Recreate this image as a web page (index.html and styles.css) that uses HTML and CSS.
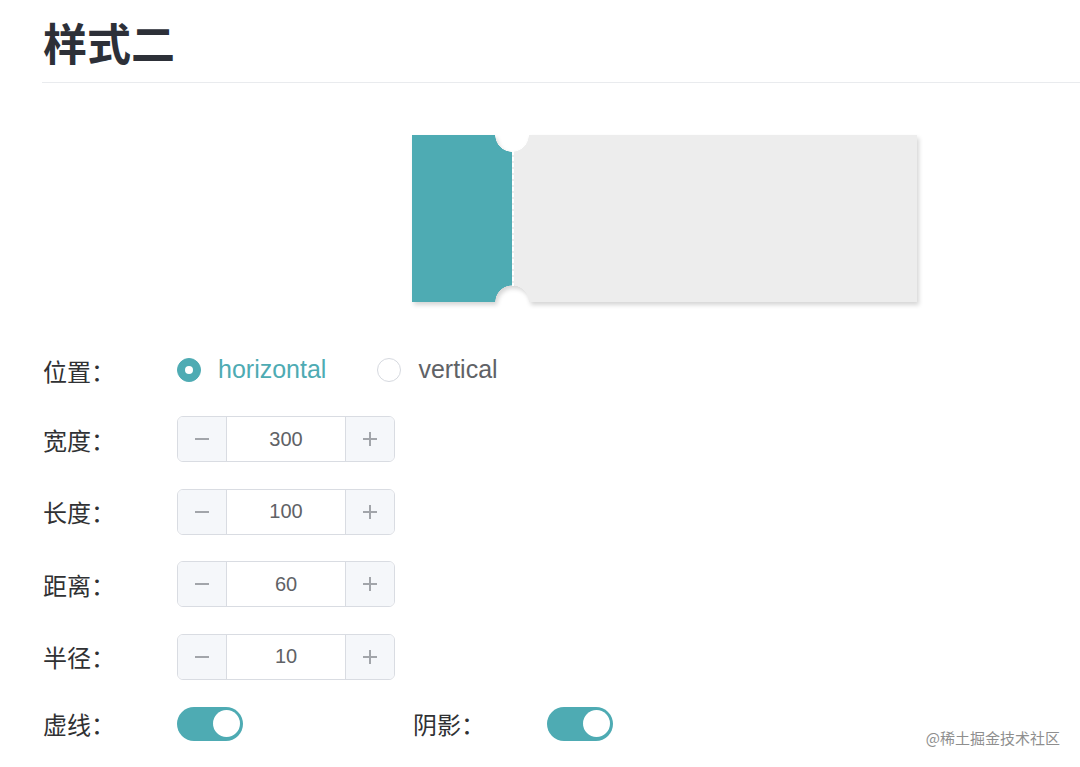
FILE: index.html
```html
<!DOCTYPE html>
<html lang="zh-CN">
<head>
<meta charset="utf-8">
<title>样式二</title>
<link rel="stylesheet" href="styles.css">
</head>
<body>
<div class="page">
  <h2 class="title">样式二</h2>

  <div class="preview">
    <div class="ticket">
      <div class="stub"></div>
      <div class="body"></div>
    </div>
  </div>

  <div class="form">
    <div class="row row-first">
      <span class="label">位置：</span>
      <div class="radios">
        <label class="radio checked"><span class="dot"></span><span class="rtext">horizontal</span></label>
        <label class="radio"><span class="dot"></span><span class="rtext">vertical</span></label>
      </div>
    </div>
    <div class="row row-second">
      <span class="label">宽度：</span>
      <div class="num"><span class="btn minus"><i class="h"></i></span><span class="val">300</span><span class="btn plus"><i class="h"></i><i class="v"></i></span></div>
    </div>
    <div class="row">
      <span class="label">长度：</span>
      <div class="num"><span class="btn minus"><i class="h"></i></span><span class="val">100</span><span class="btn plus"><i class="h"></i><i class="v"></i></span></div>
    </div>
    <div class="row">
      <span class="label">距离：</span>
      <div class="num"><span class="btn minus"><i class="h"></i></span><span class="val">60</span><span class="btn plus"><i class="h"></i><i class="v"></i></span></div>
    </div>
    <div class="row">
      <span class="label">半径：</span>
      <div class="num"><span class="btn minus"><i class="h"></i></span><span class="val">10</span><span class="btn plus"><i class="h"></i><i class="v"></i></span></div>
    </div>
    <div class="row row-last">
      <div class="field field-wide">
        <span class="label">虚线：</span>
        <span class="switch"><span class="knob"></span></span>
      </div>
      <div class="field">
        <span class="label">阴影：</span>
        <span class="switch"><span class="knob"></span></span>
      </div>
    </div>
  </div>

  <div class="watermark">@稀土掘金技术社区</div>
</div>
</body>
</html>
```

FILE: styles.css
```css
* { box-sizing: border-box; }

html, body {
  margin: 0;
  padding: 0;
  background: #ffffff;
}

body {
  font-family: "Liberation Sans", "Noto Sans CJK SC", sans-serif;
  color: #303133;
  width: 1080px;
  height: 767px;
  overflow: hidden;
}

.page {
  position: relative;
  height: 767px;
  padding-left: 42px;
}

.title {
  margin: 0;
  padding-top: 16px;
  padding-bottom: 14px;
  height: 83px;
  font-family: "Noto Sans CJK SC", sans-serif;
  font-size: 44px;
  line-height: 52px;
  font-weight: 700;
  color: #2d3038;
  border-bottom: 1px solid #e9ebee;
  padding-left: 1px;
}

.preview {
  padding-top: 52px;
  padding-left: 370px;
}

.ticket {
  display: flex;
  width: 505px;
  height: 167px;
  filter: drop-shadow(2px 3px 2px rgba(0, 0, 0, 0.16));
}

.stub {
  width: 100px;
  height: 100%;
  background:
    radial-gradient(circle at 100% 0, transparent 16.5px, #4eabb3 17px) top / 100% 51% no-repeat,
    radial-gradient(circle at 100% 100%, transparent 16.5px, #4eabb3 17px) bottom / 100% 51% no-repeat;
}

.body {
  position: relative;
  flex: 1;
  height: 100%;
  background:
    radial-gradient(circle at 0 0, transparent 16.5px, #ededed 17px) top / 100% 51% no-repeat,
    radial-gradient(circle at 0 100%, transparent 16.5px, #ededed 17px) bottom / 100% 51% no-repeat;
}

.body::before {
  content: "";
  position: absolute;
  left: 0;
  top: 16px;
  bottom: 16px;
  width: 2px;
  background: repeating-linear-gradient(to bottom, #ffffff 0 4px, transparent 4px 6px);
}

.form {
  display: flex;
  flex-direction: column;
  padding-left: 1px;
}

.row {
  display: flex;
  align-items: center;
  height: 46px;
  margin-top: 26.5px;
}

.row-first { margin-top: 45px; }
.row-second { margin-top: 23px; }
.row-last { margin-top: 21px; }

.label {
  width: 134px;
  flex: none;
  font-family: "Noto Sans CJK SC", sans-serif;
  font-size: 24px;
  color: #303133;
}

.radios {
  display: flex;
  align-items: center;
  gap: 51px;
}

.radio {
  display: flex;
  align-items: center;
  gap: 17px;
  font-size: 25px;
  color: #606266;
}

.radio .dot {
  width: 24px;
  height: 24px;
  border-radius: 50%;
  border: 1px solid #d6d9df;
  background: #ffffff;
  display: flex;
  align-items: center;
  justify-content: center;
}

.radio.checked { color: #4eabb3; }

.radio.checked .dot {
  background: #4eabb3;
  border-color: #4eabb3;
}

.radio.checked .dot::after {
  content: "";
  width: 8px;
  height: 8px;
  border-radius: 50%;
  background: #ffffff;
}

.rtext { line-height: 30px; padding-bottom: 2px; }

.num {
  display: flex;
  width: 218px;
  height: 46px;
  border: 1px solid #d9dce2;
  border-radius: 6px;
  overflow: hidden;
  background: #ffffff;
}

.num .btn {
  position: relative;
  width: 49px;
  flex: none;
  background: #f5f7fa;
  display: flex;
  align-items: center;
  justify-content: center;
}

.num .minus { border-right: 1px solid #d9dce2; }
.num .plus { border-left: 1px solid #d9dce2; }

.num .btn .h {
  display: block;
  width: 14px;
  height: 2px;
  background: #a2a5aa;
}

.num .btn .v {
  position: absolute;
  left: 50%;
  top: 50%;
  width: 2px;
  height: 14px;
  transform: translate(-50%, -50%);
  background: #a2a5aa;
}

.num .val {
  flex: 1;
  display: flex;
  align-items: center;
  justify-content: center;
  font-size: 20px;
  color: #606266;
}

.field {
  display: flex;
  align-items: center;
}

.field-wide { width: 370px; }

.switch {
  display: flex;
  align-items: center;
  justify-content: flex-end;
  width: 66px;
  height: 34px;
  border-radius: 17px;
  background: #4eabb3;
  padding-right: 3.5px;
}

.switch .knob {
  width: 27px;
  height: 27px;
  border-radius: 50%;
  background: #ffffff;
}

.watermark {
  position: absolute;
  right: 20px;
  bottom: 19px;
  font-family: "Noto Sans CJK SC", sans-serif;
  font-size: 15px;
  color: #8e8e8e;
  text-shadow: 0 0 1px rgba(255, 255, 255, 0.8);
}
```
